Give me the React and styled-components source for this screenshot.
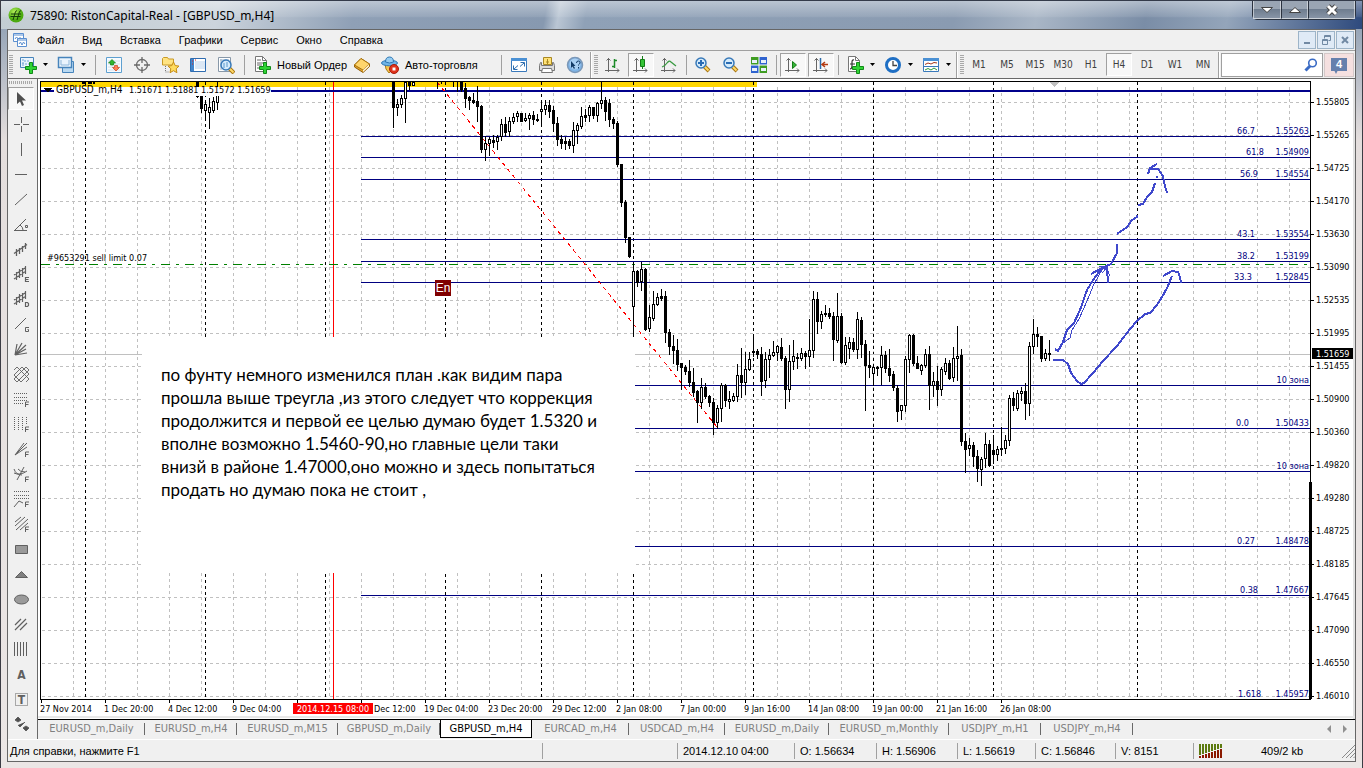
import styled, { createGlobalStyle, css } from 'styled-components';

const COLORS = {
  face: '#f0f0f0',
  line: '#a0a0a0',
  dark: '#696969',
  navy: '#000080',
  grid: '#c0c0c0',
  pen: '#3f48cc',
  icon: '#606060',
};

const FONTS = {
  ui: '"Liberation Sans", Arial, sans-serif',
  title: '"Noto Sans", "Segoe UI", sans-serif',
  chart: '"DejaVu Sans Condensed", Tahoma, sans-serif',
  note: 'Lato, Calibri, sans-serif',
};

const MENU = ['Файл', 'Вид', 'Вставка', 'Графики', 'Сервис', 'Окно', 'Справка'];

const PERIODS = ['M1', 'M5', 'M15', 'M30', 'H1', 'H4', 'D1', 'W1', 'MN'];

const TABS = [
  ['EURUSD_m,Daily', 107],
  ['EURUSD_m,H4', 92],
  ['EURUSD_m,M15', 101],
  ['GBPUSD_m,Daily', 102],
  ['GBPUSD_m,H4', 92],
  ['EURCAD_m,H4', 97],
  ['USDCAD_m,H4', 96],
  ['EURUSD_m,Daily', 104],
  ['EURUSD_m,Monthly', 120],
  ['USDJPY_m,H1', 92],
  ['USDJPY_m,H4', 92],
];
const ACTIVE_TAB = 4;

const PRICES = [
  '1.55805', '1.55265', '1.54725', '1.54170', '1.53630', '1.53090', '1.52535',
  '1.51995', '1.51455', '1.50900', '1.50360', '1.49820', '1.49280', '1.48725',
  '1.48185', '1.47645', '1.47090', '1.46550', '1.46010',
];

// the cursor date covers the fifth label and the start of the sixth
const DATES = [
  [40, '27 Nov 2014'],
  [104, '1 Dec 20:00'],
  [168, '4 Dec 12:00'],
  [232, '9 Dec 04:00'],
  [374, 'Dec 12:00'],
  [424, '19 Dec 04:00'],
  [488, '23 Dec 20:00'],
  [552, '29 Dec 12:00'],
  [616, '2 Jan 08:00'],
  [680, '7 Jan 00:00'],
  [744, '9 Jan 16:00'],
  [808, '14 Jan 08:00'],
  [872, '19 Jan 00:00'],
  [936, '21 Jan 16:00'],
  [1000, '26 Jan 08:00'],
];

// y, ratio, ratio x, right label
const LEVELS = [
  [136, '66.7', 1237, '1.55263'],
  [157, '61.8', 1246, '1.54909'],
  [179, '56.9', 1240, '1.54554'],
  [239, '43.1', 1237, '1.53554'],
  [261, '38.2', 1237, '1.53199'],
  [282, '33.3', 1234, '1.52845'],
  [385, '', 0, '10 зона'],
  [428, '0.0', 1236, '1.50433'],
  [471, '', 0, '10 зона'],
  [546, '0.27', 1237, '1.48478'],
  [595, '0.38', 1240, '1.47667'],
  [699, '1.618', 1238, '1.45957'],
];

const WEEKS = [85, 205, 325, 445, 541, 633, 753, 873, 993, 1137];

const NOTE = [
  'по фунту немного изменился план .как видим пара',
  'прошла выше треугла ,из этого следует что коррекция',
  'продолжится и первой ее целью думаю будет 1.5320 и',
  'вполне возможно 1.5460-90,но главные цели таки',
  'внизй в районе 1.47000,оно можно и здесь попытаться',
  'продать но думаю пока не стоит ,',
];

// each bar: high, top, bottom, low, rising
const BARS = [
  {
    start: 197,
    bars: [
      [82, 82, 96, 97, 0], [90, 95, 108, 112, 0], [100, 104, 110, 118, 1],
      [98, 107, 112, 128, 1], [97, 101, 110, 112, 1], [82, 95, 102, 109, 1],
    ],
  },
  {
    start: 393,
    bars: [
      [82, 82, 107, 127, 0], [99, 104, 107, 115, 1], [95, 98, 104, 107, 1],
      [82, 82, 98, 122, 1], [82, 82, 85, 89, 0], [82, 82, 85, 85, 1],
    ],
  },
  {
    start: 461,
    bars: [
      [82, 82, 89, 91, 0], [83, 88, 98, 107, 0], [96, 97, 100, 109, 0],
      [93, 100, 102, 103, 0], [86, 101, 106, 121, 0], [105, 106, 149, 152, 0],
      [136, 143, 149, 160, 1], [137, 139, 143, 155, 1], [135, 140, 142, 147, 0],
      [135, 137, 141, 149, 1], [119, 124, 136, 140, 1], [117, 124, 132, 136, 0],
      [117, 121, 131, 136, 1], [113, 117, 121, 123, 1], [111, 113, 116, 121, 1],
      [113, 113, 121, 121, 0], [113, 118, 120, 121, 1], [113, 115, 118, 129, 1],
      [111, 115, 119, 124, 0], [114, 119, 120, 121, 0], [102, 109, 111, 125, 1],
      [100, 105, 109, 114, 1], [100, 105, 111, 117, 0], [106, 110, 123, 131, 0],
      [117, 123, 139, 145, 0], [135, 139, 143, 148, 0], [137, 141, 143, 149, 0],
      [139, 141, 145, 148, 0], [122, 130, 145, 152, 1], [123, 125, 130, 143, 1],
      [107, 116, 126, 128, 1], [109, 115, 117, 121, 0], [105, 107, 115, 121, 1],
      [107, 107, 115, 118, 0], [102, 103, 115, 121, 1], [82, 100, 103, 108, 1],
      [97, 100, 111, 120, 0], [99, 103, 119, 126, 0], [117, 119, 123, 128, 0],
      [121, 123, 164, 166, 0], [164, 164, 202, 206, 0], [200, 202, 237, 242, 0],
      [237, 237, 256, 257, 0], [262, 271, 306, 338, 1], [270, 271, 282, 286, 0],
      [262, 269, 281, 290, 1], [268, 269, 329, 330, 0], [305, 317, 328, 331, 1],
      [291, 304, 318, 320, 1], [293, 297, 304, 305, 1], [289, 296, 298, 300, 0],
      [291, 296, 332, 342, 0], [329, 332, 346, 354, 0], [335, 346, 350, 363, 0],
      [339, 350, 364, 370, 0], [363, 363, 367, 389, 0], [365, 367, 371, 374, 0],
      [360, 371, 382, 386, 0], [368, 382, 392, 396, 0], [390, 391, 402, 422, 0],
      [378, 387, 402, 408, 1], [383, 387, 396, 398, 0], [395, 396, 402, 406, 0],
      [398, 402, 422, 434, 0], [405, 408, 422, 428, 1], [383, 385, 408, 421, 1],
      [384, 385, 400, 406, 0], [391, 399, 401, 408, 1], [393, 396, 400, 401, 1],
      [364, 375, 396, 401, 1], [348, 375, 382, 397, 0], [352, 369, 382, 394, 1],
      [352, 359, 369, 370, 1], [337, 351, 352, 356, 0], [349, 351, 354, 358, 0],
      [347, 354, 381, 395, 0], [352, 359, 380, 387, 1], [349, 355, 359, 377, 1],
      [341, 352, 355, 356, 1], [345, 346, 352, 360, 1], [338, 347, 358, 360, 0],
      [356, 358, 389, 408, 0], [345, 361, 389, 401, 1], [340, 356, 361, 369, 1],
      [353, 357, 358, 368, 0], [348, 353, 358, 360, 1], [351, 353, 356, 368, 0],
      [319, 350, 356, 366, 1], [291, 299, 350, 357, 1], [292, 299, 321, 333, 0],
      [311, 314, 321, 328, 1], [305, 313, 314, 316, 0], [308, 313, 316, 318, 0],
      [312, 316, 339, 360, 0], [293, 316, 340, 342, 1], [313, 316, 362, 363, 0],
      [337, 345, 362, 364, 1], [337, 342, 348, 358, 1], [338, 342, 349, 351, 0],
      [312, 319, 349, 358, 1], [317, 320, 344, 357, 0], [340, 344, 365, 410, 0],
      [351, 365, 367, 377, 0], [364, 367, 373, 385, 1], [366, 367, 368, 375, 0],
      [346, 355, 367, 384, 1], [351, 355, 368, 372, 0], [349, 368, 375, 381, 0],
      [371, 374, 387, 390, 0], [385, 388, 411, 421, 0], [405, 405, 410, 419, 1],
      [356, 359, 405, 411, 1], [334, 335, 359, 372, 1], [334, 335, 363, 365, 0],
      [356, 363, 368, 368, 0], [364, 365, 370, 374, 1], [349, 354, 365, 367, 1],
      [346, 354, 385, 409, 0], [372, 381, 385, 396, 1], [366, 381, 389, 405, 0],
      [367, 369, 389, 395, 1], [358, 363, 371, 374, 1], [360, 363, 378, 379, 0],
      [347, 358, 377, 381, 1], [326, 356, 358, 380, 1], [349, 355, 441, 445, 0],
      [433, 441, 449, 472, 0], [438, 445, 448, 455, 1], [442, 445, 456, 466, 0],
      [450, 456, 468, 481, 0], [457, 459, 469, 485, 1], [433, 444, 458, 467, 1],
      [440, 444, 465, 466, 0], [435, 450, 454, 463, 0], [446, 449, 454, 460, 1],
      [427, 448, 449, 455, 0], [435, 440, 448, 453, 1], [395, 398, 440, 445, 1],
      [392, 398, 405, 410, 0], [390, 393, 408, 410, 1], [387, 391, 393, 400, 1],
      [383, 391, 403, 419, 0], [342, 346, 403, 415, 1], [319, 334, 346, 353, 1],
      [327, 334, 336, 346, 0], [336, 336, 358, 361, 0], [349, 353, 358, 360, 1],
      [340, 353, 354, 360, 0],
    ],
  },
];

const App = () => {
  return (
    <Window>
      <GlobalStyle />
      <TitleBar>
        <LogoIcon />
        <Title>75890: RistonCapital-Real - [GBPUSD_m,H4]</Title>
        <CaptionButtons>
          <CaptionButton $width={28} aria-label="Свернуть">
            <svg width="12" height="8">
              <path d="M.5 1.5h11L6 6.500z" fill="#fff" stroke="#444" />
            </svg>
          </CaptionButton>
          <CaptionButton $width={27} aria-label="Развернуть">
            <svg width="12" height="8">
              <path d="M.5 6.5h11L6 1.5z" fill="#fff" stroke="#444" />
            </svg>
          </CaptionButton>
          <CaptionButton $width={47} aria-label="Закрыть">
            <svg width="14" height="12">
              <path d="M3 2l8 8M11 2l-8 8" stroke="#444" strokeWidth="5" />
              <path d="M3 2l8 8M11 2l-8 8" stroke="#fff" strokeWidth="3" />
            </svg>
          </CaptionButton>
        </CaptionButtons>
      </TitleBar>
      <Panel>
        <MenuBar>
          <ChartFileIcon />
          {MENU.map((item) => (
            <MenuItem key={item}>{item}</MenuItem>
          ))}
          <MdiButtons>
            <MdiButton aria-label="Свернуть окно">
              <svg width="12" height="12">
                <path d="M3 9h6" stroke="#7189a3" strokeWidth="2" />
              </svg>
            </MdiButton>
            <MdiButton aria-label="Восстановить окно">
              <svg width="12" height="12" fill="none" stroke="#7189a3">
                <path d="M4.500 4.500v-3h6v5h-2M4.500 2.500h6M2.500 5.500h5v5h-5zM2.500 6.500h5" />
              </svg>
            </MdiButton>
            <MdiButton aria-label="Закрыть окно">
              <svg width="12" height="12">
                <path d="M3 3l6 6M9 3l-6 6" stroke="#7189a3" strokeWidth="2" />
              </svg>
            </MdiButton>
          </MdiButtons>
        </MenuBar>
        <ToolBar>
          <Grip />
          <Tool label="Новый график" icon={<AddChartIcon />} menu />
          <Tool label="Профили" icon={<ProfilesIcon />} menu />
          <Separator $width={10} />
          <Tool label="Обзор рынка" icon={<MarketIcon />} />
          <Tool label="Окно данных" icon={<TargetIcon />} />
          <Tool label="Навигатор" icon={<FolderIcon />} />
          <Tool label="Терминал" icon={<TerminalIcon />} />
          <Tool label="Тестер стратегий" icon={<TesterIcon />} />
          <Separator $width={8} />
          <TextTool $width={100}>
            <NewOrderIcon />
            Новый Ордер
          </TextTool>
          <Tool label="MetaEditor" icon={<BookIcon />} />
          <TextTool $width={121}>
            <RobotIcon />
            Авто-торговля
          </TextTool>
          <Separator $width={8} />
          <Tool label="Полный экран" icon={<FullscreenIcon />} />
          <Tool label="Печать" icon={<PrinterIcon />} />
          <Tool label="Помощь" icon={<HelpIcon />} />
          <Divider />
          <Grip />
          <Tool label="Бары" icon={<AxisIcon kind="bars" />} />
          <Tool label="Свечи" icon={<AxisIcon kind="candle" />} pressed />
          <Tool label="Линия" icon={<AxisIcon kind="line" />} />
          <Separator $width={6} />
          <Tool label="Увеличить" icon={<ZoomIcon plus />} />
          <Tool label="Уменьшить" icon={<ZoomIcon />} />
          <Tool label="Расположить окна" icon={<TileIcon />} />
          <Separator $width={6} />
          <Tool label="Автопрокрутка" icon={<AxisIcon kind="scroll" />} pressed />
          <Tool label="Сдвиг графика" icon={<AxisIcon kind="shift" />} pressed />
          <Separator $width={6} />
          <Tool label="Индикаторы" icon={<IndicatorIcon />} menu />
          <Tool label="Периоды" icon={<ClockIcon />} menu />
          <Tool label="Шаблоны" icon={<TemplateIcon />} menu />
          <Divider />
          <Grip />
          {PERIODS.map((period) => (
            <PeriodButton key={period} $pressed={period === 'H4'}>
              {period}
            </PeriodButton>
          ))}
          <Divider />
          <SearchBox>
            <SearchInput aria-label="Поиск" />
            <SearchIcon />
          </SearchBox>
          <ChatButton>
            <ChatBubble>4</ChatBubble>
          </ChatButton>
        </ToolBar>
        <Main>
          <SideBar>
            <SideGrip />
            {DRAW_TOOLS.map(([label, icon], i) => (
              <SideButton key={label} aria-label={label} $pressed={i === 0}>
                <svg width="18" height="18" fill="none" stroke={COLORS.icon}>
                  {icon}
                </svg>
              </SideButton>
            ))}
          </SideBar>
          <Workspace>
            <Chart />
            <TabBar>
              {TABS.map(([name, width], i) => (
                <Tab key={i} $width={width} $active={i === ACTIVE_TAB}>
                  {name}
                </Tab>
              ))}
              <TabArrows>
                <svg width="20" height="8" fill="#909090">
                  <path d="M4 0v8L0 4zM16 0v8l4-4z" />
                </svg>
              </TabArrows>
            </TabBar>
          </Workspace>
        </Main>
        <StatusBar>
          <StatusHelp>Для справки, нажмите F1</StatusHelp>
          <StatusCell $width={135} />
          <StatusCell $width={117}>2014.12.10 04:00</StatusCell>
          <StatusCell $width={82}>O: 1.56634</StatusCell>
          <StatusCell $width={81}>H: 1.56906</StatusCell>
          <StatusCell $width={78}>L: 1.56619</StatusCell>
          <StatusCell $width={80}>C: 1.56846</StatusCell>
          <StatusCell $width={78}>V: 8151</StatusCell>
          <StatusCell $width={162}>
            <TrafficIcon />
            <Traffic>409/2 kb</Traffic>
            <ResizeGrip />
          </StatusCell>
        </StatusBar>
      </Panel>
    </Window>
  );
};

const Tool = ({ label, icon, menu, pressed }) => (
  <>
    <ToolButton aria-label={label} $pressed={pressed}>
      {icon}
    </ToolButton>
    {menu && (
      <ArrowButton aria-label={`${label}: меню`}>
        <svg width="5" height="3">
          <path d="M0 0h5L2.500 3z" />
        </svg>
      </ArrowButton>
    )}
  </>
);

const Candle = ({ x, bar }) => {
  const [high, top, bottom, low, rising] = bar;
  const height = bottom - top + 1;

  return (
    <>
      <rect x={x} y={high} width="1" height={low - high + 1} />
      <rect x={x - 1} y={top} width="3" height={height} />
      {rising === 1 && height > 2 && (
        <rect x={x} y={top + 1} width="1" height={height - 2} fill="#fff" />
      )}
    </>
  );
};

// the viewBox starts at the chart's corner inside the terminal window
const Chart = () => (
  <ChartCanvas viewBox="38 79 1317 640">
    <g shapeRendering="crispEdges">
      <rect x="38" y="79" width="1317" height="640" fill="#fff" />
      <rect x="1353" y="79" width="2" height="640" fill="#e3e3e3" />
      <rect x="38" y="716" width="1317" height="2" fill="#e8e8e8" />

      <rect x="41" y="82" width="716" height="5" fill="#ffd700" />

      <g stroke={COLORS.grid} strokeDasharray="3 3">
        {PRICES.map((price, i) => (
          <path key={price} d={`M42 ${102.5 + i * 33}H1310`} />
        ))}
        {Array.from({ length: 39 }, (_, i) => (
          <path key={i} d={`M${73.5 + i * 32} 87V699`} />
        ))}
      </g>
      <g stroke="#000" strokeDasharray="3 3">
        {WEEKS.map((x) => (
          <path key={x} d={`M${x}.5 82V699`} />
        ))}
      </g>
      <rect x="41" y="354" width="1269" height="1" fill={COLORS.grid} />
      <rect x="333" y="82" width="1" height="617" fill="#f00" />

      <rect x="41" y="90" width="1269" height="2" fill="#00008b" />
      {LEVELS.slice(0, -1).map(([y]) => (
        <rect key={y} x="361" y={y} width="949" height="1" fill={COLORS.navy} />
      ))}
      <path
        d="M41 264.5H1310"
        stroke="#008000"
        strokeDasharray="9 6 3 6"
      />
      <path d="M437 82L717 427" stroke="#f00" strokeDasharray="4 4" />

      <g fill="#000">
        <path d="M437 82h1v7h-1zM441 82h1v2h-1zM453 82h1v5h-1zM457 82h1v10h-1z" />
        <path d="M82 82h3v2h-3zM88 82h4v2h-4zM93 82h2v2h-2z" />
        {BARS.map(({ start, bars }) =>
          bars.map((bar, i) => (
            <Candle key={start + i * 4} x={start + i * 4} bar={bar} />
          ))
        )}
      </g>

      <rect x="54" y="87" width="217" height="9" fill="#fff" />
      <path d="M43 88h9l-4 4h-1z" fill="#000" />
      <rect x="142" y="337" width="493" height="236" fill="#fff" />
      <path d="M1050 82h9l-4.500 5z" fill={COLORS.grid} />

      <rect x="40" y="81" width="1271" height="1" />
      <rect x="40" y="81" width="1" height="619" />
      <rect x="40" y="699" width="1271" height="1" />
      <rect x="1310" y="81" width="1" height="619" />
      <rect x="1309" y="482" width="3" height="217" />

      {PRICES.map((price, i) => (
        <rect key={price} x="1311" y={102 + i * 33} width="3" height="1" />
      ))}
      {Array.from({ length: 16 }, (_, i) => (
        <rect key={i} x={41 + i * 64} y="700" width="1" height="3" />
      ))}
    </g>

    <g
      fill="none"
      stroke={COLORS.pen}
      strokeWidth="2"
      strokeLinejoin="round"
      shapeRendering="crispEdges"
    >
      <path d="M1053 360l10 0 5 4 3 9 6 8 4 3 3-1 9-10 10-12 14-15 13-17 7-8 8-7 5-1 7-8 5-8 5-9 5-12M1163 276l9-5 6 1 2 5 1 6" />
      <path d="M1055 349l3 2 5-9 4-12 7-7 6-13 7-20 6-10 9-12 9-4 6-11 0-9M1091 274l11-6 5 1 1 14" />
      <path d="M1117 234l10-7 5-7 5-3 0-2M1138 205l5-1 4-7 5-5 3-9M1148 174l2-6 7-4M1150 169l8 0 5 7 2 10 2 7M1156 177h2" />
      <path
        d="M1103 268l-9 16-7 17-8 18-7 11-2 8-7 5M1099 266l7 1 4 9M1102 273l6-6"
        strokeWidth="1"
      />
    </g>

    <TickerText x="56" y="93">
      GBPUSD_m,H4
    </TickerText>
    <ChartText x="129" y="93">
      1.51671 1.51881 1.51572 1.51659
    </ChartText>
    <ChartText x="47" y="261">
      #9653291 sell limit 0.07
    </ChartText>
    {LEVELS.map(([y, ratio, x, label]) => (
      <g key={y}>
        <ChartText x={x} y={y - 2} $color={COLORS.navy}>
          {ratio}
        </ChartText>
        <ChartText x="1309" y={y - 2} $color={COLORS.navy} textAnchor="end">
          {label}
        </ChartText>
      </g>
    ))}
    {PRICES.map((price, i) => (
      <ChartText key={price} x="1316" y={105 + i * 33}>
        {price}
      </ChartText>
    ))}
    {DATES.map(([x, date]) => (
      <ChartText key={date} x={x} y="712">
        {date}
      </ChartText>
    ))}

    <rect x="293" y="703" width="80" height="11" fill="#f00" />
    <ChartText x="333" y="712" $color="#fff" textAnchor="middle">
      2014.12.15 08:00
    </ChartText>
    <rect x="1312" y="348" width="41" height="11" />
    <ChartText x="1316" y="357" $color="#fff">
      1.51659
    </ChartText>

    <rect x="435" y="280" width="16" height="16" fill="#800000" />
    <BadgeText x="443" y="292">
      En
    </BadgeText>

    {NOTE.map((line, i) => (
      <NoteText key={line} x="161" y={381 + i * 23}>
        {line}
      </NoteText>
    ))}
  </ChartCanvas>
);

const LogoIcon = () => (
  <svg width="16" height="16">
    <defs>
      <radialGradient id="logo" cx="40%" cy="30%">
        <stop offset="0" stopColor="#b6f05a" />
        <stop offset="1" stopColor="#4caa10" />
      </radialGradient>
    </defs>
    <circle cx="8" cy="8" r="7.5" fill="url(#logo)" />
    <path
      d="M3 7h10M2.500 9.500h10M5 13l2.500-8.500q.5-1 1.500-.5M9 13l2.500-8.500q.5-1 1.500-.5"
      fill="none"
      stroke="#123c08"
    />
  </svg>
);

const ChartFileIcon = () => (
  <svg width="16" height="16" fill="#fff" stroke="#5b8fd0">
    <path d="M1.500 1.500h10v8h-10z" />
    <path d="M2 3h9" />
    <path d="M3 7l1.500-2 2 2 2-2" fill="none" />
    <path d="M5.500 6.500h9v8h-9z" />
    <path d="M6 8h8M7 12l1.500-2 1.500 3 1.500-3 1.500 2" fill="none" />
  </svg>
);

const PlusMark = () => (
  <path
    d="M10.500 6.500h3v4h4v3h-4v4h-3v-4h-4v-3h4z"
    fill="#2fd334"
    stroke="#118a18"
  />
);

const AddChartIcon = () => (
  <svg width="18" height="18">
    <path d="M1.500 1.500h13v10h-13z" fill="#eaf4fd" stroke="#4784bb" />
    <path d="M4 3v7M3 8h9M5 5h6" stroke="#6fa3d3" strokeDasharray="2 1" />
    <PlusMark />
  </svg>
);

const ProfilesIcon = () => (
  <svg width="18" height="18" fill="#eaf4fd" stroke="#4784bb">
    <path d="M5.500 5.500h11v11h-11z" fill="#b9d9f2" />
    <path d="M1.500 1.500h13v10h-13z" strokeWidth="1.500" />
    <path d="M4 4v5M12 4v5M4 9h8" stroke="#8fb7da" />
  </svg>
);

const MarketIcon = () => (
  <svg width="18" height="18">
    <path d="M1.500 1.500h15v15h-15z" fill="#f7fbff" stroke="#5ea0d0" />
    <path d="M3 5h12M3 8h12M3 11h12M3 14h12" stroke="#d5e0ea" />
    <path d="M3.500 7L7 3.500l3.500 3.500h-2v2h-3v-2z" fill="#30b52f" stroke="#137d16" strokeWidth=".7" />
    <path d="M7.500 11.500l3.500 3.500 3.500-3.500h-2v-2h-3v2z" fill="#ff8055" stroke="#c9401c" strokeWidth=".7" />
  </svg>
);

const TargetIcon = () => (
  <svg width="18" height="18" fill="none" stroke="#6a6a6a" strokeWidth="1.300">
    <circle cx="9" cy="9" r="5.5" />
    <path d="M9 1v6M9 11v6M1 9h6M11 9h6" />
  </svg>
);

const Star = () => (
  <path
    d="M12.500 6l1.700 3.600 3.800.5-2.800 2.600.7 4-3.400-2-3.500 2 .8-4L7 10.100l3.800-.5z"
    fill="#ffdc5e"
    stroke="#c58b14"
  />
);

const FolderIcon = () => (
  <svg width="19" height="18">
    <path d="M1.500 2.500l1-1h4l1 1.500h5v6h-11z" fill="#ffe382" stroke="#c99a26" />
    <path d="M4.500 10v6h4" fill="none" stroke="#777" strokeDasharray="1 1" />
    <Star />
  </svg>
);

const TerminalIcon = () => (
  <svg width="18" height="18">
    <path d="M1.500 2.500h15v13h-15z" fill="#fff" stroke="#2f6cb0" />
    <path d="M2 3h3v12h-3z" fill="#4385cb" />
    <path d="M6 6h10M6 8h10M6 10h10M6 12h10" stroke="#b9d0ea" />
    <path d="M6 4h1M3 5h1M3 8h1" stroke="#d22" />
  </svg>
);

const Lens = ({ x, y }) => (
  <g transform={`translate(${x} ${y})`}>
    <path d="M9 9l5 5" stroke="#a9750f" strokeWidth="4" />
    <path d="M9 9l4.500 4.500" stroke="#ffd968" strokeWidth="2" />
    <circle cx="6" cy="6" r="5" fill="#d5ebfb" stroke="#3879b8" strokeWidth="1.500" />
  </g>
);

const TesterIcon = () => (
  <svg width="18" height="18">
    <path d="M1.500 1.500h12v14h-12z" fill="#fff" stroke="#8898a8" />
    <path d="M3 4h9M4 3v11M4 8h3" stroke="#9ab0c4" />
    <Lens x={3} y={3} />
    <path d="M7 7v5M10 6v5" stroke="#5d98cc" />
  </svg>
);

const SheetPlus = ({ children }) => (
  <svg width="18" height="18">
    <path d="M2.500.500h7l4 4v11h-11z" fill="#fff" stroke="#777" />
    <path d="M9.500.500v4h4" fill="none" stroke="#777" />
    {children}
    <PlusMark />
  </svg>
);

const NewOrderIcon = () => (
  <SheetPlus>
    <path d="M4 4h4M4 7h7M4 9h5M4 12h4" stroke="#666" />
  </SheetPlus>
);

const IndicatorIcon = () => (
  <SheetPlus>
    <path
      d="M4 13q2 0 2-3V6q0-2.500 2-2M4 8h5"
      fill="none"
      stroke="#333"
      strokeWidth="1.200"
    />
  </SheetPlus>
);

const BookIcon = () => (
  <svg width="18" height="18">
    <path d="M1.500 9L8 2.500l8.500 5.500v2.500L10 16.500 1.500 11z" fill="#e0a22a" stroke="#93600c" />
    <path d="M1.500 9L8 2.500l8.500 5.500-6.500 6z" fill="#ffd56c" stroke="#a8730f" />
    <path d="M10 14v2l6-5.500v-2z" fill="#fff3d4" />
  </svg>
);

const RobotIcon = () => (
  <svg width="18" height="18">
    <path d="M4 8h9l-1 5-4 4-3-4z" fill="#f8c84e" stroke="#a87a18" />
    <ellipse cx="8.5" cy="7" rx="8" ry="2.8" fill="#6fb4e6" stroke="#2f78b4" />
    <path d="M4.500 6q0-5 4-5t4 5q-4 2-8 0z" fill="#96cdf2" stroke="#2f78b4" />
    <circle cx="13" cy="13" r="4.5" fill="#e0331c" stroke="#a81c0c" />
    <path d="M11.500 11.500h3v3h-3z" fill="#fff" />
  </svg>
);

const FullscreenIcon = () => (
  <svg width="18" height="18">
    <path d="M1.500 2.500h15v13h-15z" fill="#fff" stroke="#3a79bb" />
    <path d="M1 2h16v3h-16z" fill="#4a90d4" />
    <path d="M10.500 6.500h4v4M14 7l-4 3.500M3.500 9.500v4h4M4 13l4-3.500" fill="none" stroke="#2c6cae" />
  </svg>
);

const PrinterIcon = () => (
  <svg width="18" height="18">
    <path d="M5.500 1.500h8v7h-8z" fill="#ffe277" stroke="#a98822" />
    <path d="M9.500 3v5M8 6h3" stroke="#a98822" />
    <path d="M3.500 6.500h-1l-1 3v5h15v-5l-1-3h-1v3h-11z" fill="#dcdcdc" stroke="#777" />
    <path d="M4.500 12.500h9l1 4h-11z" fill="#fff" stroke="#777" />
  </svg>
);

const HelpIcon = () => (
  <svg width="18" height="18">
    <circle cx="9" cy="9" r="7.5" fill="#7fb4e6" stroke="#7b98b8" strokeWidth="1.500" />
    <circle cx="9" cy="8" r="5.5" fill="#a9cff2" />
    <path d="M5 5v7l1.500-1.500 1.500 2.500 1-1-1.500-2h2z" fill="#123a66" />
    <path d="M10.500 7q0-2 1.800-2t1.700 1.800q0 1-1.500 2v.7M12.500 11v1.500" fill="none" stroke="#123a66" />
  </svg>
);

const AxisIcon = ({ kind }) => (
  <svg width="18" height="18" fill="none">
    <path
      d="M4.500 2v14M1 14.500h14M2.500 4.500l2-2 2 2M13 12.500l2 2-2 2"
      stroke="#666"
    />
    {kind === 'bars' && (
      <path d="M10.500 3v9M8 10.500h2.500M10.500 4.500h2.500" stroke="#1c8a28" strokeWidth="1.500" />
    )}
    {kind === 'candle' && (
      <>
        <path d="M10.500 0v13" stroke="#137d16" />
        <path d="M8.500 3.500h4v7h-4z" fill="#35c437" stroke="#137d16" />
      </>
    )}
    {kind === 'line' && (
      <path d="M2 11q3-1 5-4t4-1l5 4" stroke="#3a9a42" strokeWidth="1.300" />
    )}
    {kind === 'scroll' && (
      <path d="M8.500 5.500l4 3.500-4 3.500z" fill="#35b437" stroke="#137d16" />
    )}
    {kind === 'shift' && (
      <>
        <path d="M8.500 2v11" stroke="#2b6aa8" strokeWidth="1.500" />
        <path d="M10 8.500h6M13 6l-3 2.500 3 2.500" stroke="#b33a12" strokeWidth="1.500" />
      </>
    )}
  </svg>
);

const ZoomIcon = ({ plus }) => (
  <svg width="18" height="18">
    <Lens x={1} y={1} />
    <path d={plus ? 'M4 7h6M7 4v6' : 'M4 7h6'} stroke="#2a6cb4" strokeWidth="2" />
  </svg>
);

const TileIcon = () => (
  <svg width="18" height="18">
    <path d="M1 1h8v8h-8zM9 9h8v8h-8z" fill="#3f9c22" />
    <path d="M9 1h8v8h-8zM1 9h8v8h-8z" fill="#2f63cf" />
    <path d="M2 4h5v3h-5zM11 4h5v3h-5zM2 12h5v3h-5zM11 12h5v3h-5z" fill="#e8f0fb" />
    <path d="M9 1v16M1 9h16" stroke="#fff" />
  </svg>
);

const ClockIcon = () => (
  <svg width="18" height="18">
    <circle cx="9" cy="9" r="6.5" fill="#fff" stroke="#1f6fc4" strokeWidth="3" />
    <path d="M9 5v4.500h4" fill="none" stroke="#444" strokeWidth="1.300" />
  </svg>
);

const TemplateIcon = () => (
  <svg width="18" height="18">
    <path d="M1.500 2.500h15v13h-15z" fill="#fff" stroke="#3a79bb" />
    <path d="M1 2h16v3h-16z" fill="#4a90d4" />
    <path d="M2 10.500h14" stroke="#3a79bb" />
    <path d="M3 8.500l3-1.500 3 1 3-1.500 3 .5" fill="none" stroke="#a3361a" />
    <path d="M3 14l3-1.500 3 1.500 3-2 3 2" fill="none" stroke="#2c9a38" />
  </svg>
);

const SearchIcon = () => (
  <svg width="14" height="14" fill="none" stroke="#3a6bc4">
    <path d="M1.500 12.500L6 8" strokeWidth="3" />
    <circle cx="8.5" cy="5" r="3.8" strokeWidth="1.600" />
  </svg>
);

const TrafficIcon = () => (
  <svg width="24" height="14">
    {Array.from({ length: 8 }, (_, i) => (
      <g key={i}>
        <rect x={i * 3} y="0" width="2" height="14" fill="#8b1a00" />
        <rect x={i * 3} y="0" width="2" height={11 - i} fill="#5c7a10" />
        <rect x={i * 3} y={11 - i} width="2" height="1" fill="#f0f0f0" />
      </g>
    ))}
  </svg>
);

const ResizeGrip = () => (
  <svg width="14" height="14" stroke="#8a8a8a">
    <path d="M1 14L14 1M5 14l9-9M9 14l5-5M12.500 14l1.500-1.500" />
  </svg>
);

const letterF = <path d="M13.500 17v-5h3.500M13.500 14.500h3" />;

const Letter = ({ children }) => (
  <Glyph x="9.5" y="14" textAnchor="middle">
    {children}
  </Glyph>
);

const DRAW_TOOLS = [
  ['Курсор', <path d="M5 2v12l3-2.500 2 4.500 2-1-2-4.500h4z" fill="#505050" stroke="none" />],
  ['Перекрестие', <path d="M9.500 2v6M9.500 11v6M2 9.500h6M11 9.500h6" />],
  ['Вертикальная линия', <path d="M9.500 3v13" />],
  ['Горизонтальная линия', <path d="M3 9.500h12" />],
  ['Трендовая линия', <path d="M3 15L15 4" />],
  ['Трендовая линия по углу', <path d="M2 15.500h13M3 15L14 4M8 10q3 2 3 5M13.500 10.500h2v2h-2z" />],
  ['Равноудаленный канал', <path d="M2 13.500l13-9M4.500 9v7M7.500 8v6M10.500 6v6M13.500 3v6" strokeWidth="1.300" />],
  ['Канал отклонения', <path d="M2 10l11-7M2 14l12-8M4.500 7v8M7.500 4v9M10.500 3v9M13.500 1v8M17 12.500h-3.500v4h3.500M13.500 14.500h3" strokeWidth="1.200" />],
  ['Канал регрессии', <path d="M2 10l11-7M2 14l12-8M4.500 7v8M7.500 4v9M10.500 3v9M13.500 1v8M13.500 12.500h2l1 1v2l-1 1h-2z" strokeWidth="1.200" />],
  ['Линия Ганна', <path d="M3 14L14 3M17 12.500h-3.500v4h3v-2h-1" />],
  ['Веер Ганна', <path d="M3 15L5 4M3 15L10 3M3 15L14 5M3 15l11-6M3 15l12-2" strokeWidth="1.200" />],
  ['Сетка Ганна', <path d="M2 5l3-3 12 12-3 3M2 10l8-8 7 7-8 8-7-7M2 14L14 2l3 3L5 17z" strokeWidth=".9" />],
  ['Линии Фибоначчи', <><path d="M2 3.500h14M2 7.500h14M2 10.500h14M2 13.500h10" strokeDasharray="1 1" />{letterF}</>],
  ['Временные зоны Фибоначчи', <><path d="M2.500 2v13M6.500 2v13M10.500 2v13M14.500 2v8" strokeDasharray="1 1" />{letterF}</>],
  ['Веер Фибоначчи', <><path d="M3 15L12 3M3 15L15 3M3 15l12-8" />{letterF}</>],
  ['Дуги Фибоначчи', <><path d="M2 4q2 6 8 6M6 4q2 3 7 3M5 15L12 2M2 8q6 3 13-2" />{letterF}</>],
  ['Расширение Фибоначчи', <><path d="M2 1.500h15M2 5.500h15M2 8.500h15" strokeDasharray="1 1" /><path d="M2 17l5-6 4 2" />{letterF}</>],
  ['Канал Фибоначчи', <><path d="M3 7l6-5M3 11L13 2M4 15L16 4M8 15l8-7" />{letterF}</>],
  ['Прямоугольник', <path d="M3.500 5.500h12v8h-12z" fill="#9a9a9a" />],
  ['Треугольник', <path d="M3.500 12.500l6-6 6 6z" fill="#808080" />],
  ['Эллипс', <ellipse cx="9.5" cy="9.5" rx="7" ry="4.5" fill="#9a9a9a" />],
  ['Вилы Эндрюса', <path d="M3 10l6-6M3 15L14 4M8 15l7-7" strokeWidth="1.200" />],
  ['Циклические линии', <path d="M2.500 2v14M5.500 2v14M8.500 2v14M11.500 2v14M14.500 2v14" />],
  ['Текст', <Letter>A</Letter>],
  ['Метка', <><path d="M3.500 3.500h12v12h-12z" strokeDasharray="1 1" /><Letter>T</Letter></>],
  ['Стрелки', <path d="M3 5l3-3 3 3-3 2zM11 13l3-2 3 2-3 3zM6 10l2 2 5-5" fill="#505050" />],
];

const GlobalStyle = createGlobalStyle`
  * {
    box-sizing: border-box;
  }

  body {
    margin: 0;
    font-family: ${FONTS.ui};
    font-size: 11px;
    color: #000;
  }

  button {
    padding: 0;
    border: 0;
    background: none;
    font: inherit;
    color: inherit;
  }

  svg {
    display: block;
    flex: none;
  }
`;

const pressedStyle = css`
  border: 1px solid #fff;
  border-top-color: ${COLORS.line};
  border-left-color: ${COLORS.line};
  background: #f8f8f8;
`;

const Window = styled.div`
  min-height: 100vh;
  padding: 0 6px 6px;

  display: flex;
  flex-direction: column;

  border: 1px solid #3c3c44;
  border-top: 0;
  background: linear-gradient(#a9b6c8 0, #98a6b8 30px, #e4dedd 140px, #ebe6e5);
`;

const TitleBar = styled.header`
  height: 29px;
  margin: 0 -6px;
  padding-left: 7px;

  display: flex;
  align-items: center;
  gap: 6px;

  border-top: 1px solid #343b4a;
  background: linear-gradient(
      rgba(255, 255, 255, 0.4),
      rgba(255, 255, 255, 0.1) 55%,
      rgba(255, 255, 255, 0) 60%
    ),
    linear-gradient(
      100deg,
      #c3cdd2 0,
      #ccd4dc 16%,
      #8fa0b6 26%,
      #8799b0 40%,
      #bac6d4 41%,
      #8fa1b7 43%,
      #8a9bb1 70%,
      #a9b6c6 76%,
      #7a8da6 84%,
      #94a5ba 90%,
      #2e4a7d 100%
    );
`;

const Title = styled.h1`
  margin: 0;

  font-family: ${FONTS.title};
  font-size: 12px;
  font-weight: 400;
  white-space: nowrap;
`;

const CaptionButtons = styled.div`
  margin: 0 6px 0 auto;

  align-self: flex-start;
  display: flex;

  border: 1px solid #2b3340;
  border-top: 0;
  border-radius: 0 0 5px 5px;
`;

const CaptionButton = styled.button`
  width: ${({ $width }) => $width}px;
  height: 18px;

  display: flex;
  align-items: center;
  justify-content: center;

  border: 1px solid rgba(255, 255, 255, 0.5);
  border-top: 0;
  background: linear-gradient(#9aa5b3 50%, #6f7d8f 50%, #8794a6);

  & + & {
    border-left: 1px solid #2b3340;
  }
`;

const Panel = styled.div`
  flex: 1;

  display: flex;
  flex-direction: column;

  border: 1px solid #666;
  background: ${COLORS.face};
`;

const MenuBar = styled.nav`
  height: 21px;
  padding-left: 4px;

  display: flex;
  align-items: center;

  border-bottom: 1px solid ${COLORS.line};
`;

const MenuItem = styled.button`
  padding: 0 9px;
`;

const MdiButtons = styled.div`
  margin-left: auto;
  padding-right: 1px;

  display: flex;
  gap: 1px;
`;

const MdiButton = styled.button`
  width: 18px;
  height: 18px;

  display: flex;
  align-items: center;
  justify-content: center;

  border: 1px solid #9db4c8;
  background: #dfeaf6;
`;

const ToolBar = styled.div`
  height: 28px;

  display: flex;
  align-items: center;

  border-bottom: 1px solid ${COLORS.dark};
`;

const Grip = styled.div`
  width: 4px;
  height: 20px;
  margin: 0 1px;

  flex: none;
  background: repeating-linear-gradient(#a8a8a8 0 1px, transparent 1px 2px);
`;

const ToolButton = styled.button`
  width: 28px;
  height: 24px;

  flex: none;
  display: flex;
  align-items: center;
  justify-content: center;

  ${({ $pressed }) =>
    $pressed &&
    css`
      width: 26px;
      margin: 0 1px;
      ${pressedStyle}
    `}
`;

const ArrowButton = styled.button`
  width: 10px;
  height: 24px;
  padding-left: 1px;

  flex: none;
`;

const TextTool = styled.button`
  width: ${({ $width }) => $width}px;
  height: 24px;
  padding-left: 5px;

  flex: none;
  display: flex;
  align-items: center;
  gap: 6px;

  white-space: nowrap;
`;

const Separator = styled.div`
  width: ${({ $width }) => $width}px;
  height: 20px;

  flex: none;
  background: linear-gradient(${COLORS.line}, ${COLORS.line}) center / 1px 100%
    no-repeat;
`;

const Divider = styled.div`
  width: 2px;
  height: 26px;
  margin: 0 1px;

  flex: none;
  border-left: 1px solid ${COLORS.line};
  border-right: 1px solid #fff;
`;

const PeriodButton = styled.button`
  width: ${({ $pressed }) => ($pressed ? 26 : 28)}px;
  height: 23px;

  flex: none;
  color: #404040;
  font-family: ${FONTS.chart};
  font-size: 10px;

  ${({ $pressed }) =>
    $pressed &&
    css`
      margin: 0 1px;
      ${pressedStyle}
    `}
`;

const SearchBox = styled.label`
  min-width: 60px;
  height: 24px;
  padding-right: 4px;

  flex: 1;
  display: flex;
  align-items: center;

  border: 1px solid ${COLORS.line};
  background: #fff;
`;

const SearchInput = styled.input`
  min-width: 0;

  flex: 1;
  border: 0;
  outline: 0;
  font: inherit;
`;

const ChatButton = styled.button`
  width: 30px;
  height: 24px;
  margin: 0 1px;

  display: flex;
  align-items: center;
  justify-content: center;

  border: 1px solid #d4c8c8;
  background: #f5e0e0;
`;

const ChatBubble = styled.span`
  position: relative;
  width: 16px;
  height: 13px;

  background: #6680ad;
  color: #fff;
  font-weight: 700;
  line-height: 13px;

  &::after {
    content: '';
    position: absolute;
    top: 12px;
    left: 3px;
    border: 2px solid transparent;
    border-top: 4px solid #6680ad;
  }
`;

const Main = styled.main`
  flex: 1;
  display: flex;
`;

const SideBar = styled.aside`
  width: 30px;
  padding: 2px 3px 0 0;

  flex: none;
  display: flex;
  flex-direction: column;
  align-items: center;

  border-right: 1px solid ${COLORS.dark};
`;

const SideGrip = styled.div`
  width: 24px;
  height: 3px;
  margin-bottom: 2px;

  background: repeating-linear-gradient(
    90deg,
    #a8a8a8 0 1px,
    transparent 1px 2px
  );
`;

const SideButton = styled.button`
  width: 26px;
  height: ${({ $pressed }) => ($pressed ? 23 : 25)}px;

  display: flex;
  align-items: center;
  justify-content: center;

  ${({ $pressed }) =>
    $pressed &&
    css`
      margin: 1px 0;
      ${pressedStyle}
    `}
`;

const Glyph = styled.text`
  fill: #606060;
  stroke: none;
  font-family: ${FONTS.chart};
  font-size: 12px;
  font-weight: 700;
`;

const Workspace = styled.section`
  min-width: 0;

  flex: 1;
  display: flex;
  flex-direction: column;
`;

const ChartCanvas = styled.svg`
  width: 100%;
  height: auto;
`;

const ChartText = styled.text`
  fill: ${({ $color }) => $color || '#000'};
  font-family: ${FONTS.chart};
  font-size: 9px;
`;

const TickerText = styled(ChartText)`
  font-size: 10px;
`;

const BadgeText = styled.text`
  fill: #fff;
  text-anchor: middle;
  font-family: ${FONTS.ui};
  font-size: 12px;
`;

const NoteText = styled.text`
  font-family: ${FONTS.note};
  font-size: 17px;
`;

const TabBar = styled.div`
  height: 20px;

  display: flex;
  align-items: flex-start;

  border-top: 1px solid #000;
`;

const Tab = styled.button`
  position: relative;
  width: ${({ $width }) => $width}px;
  height: 18px;

  flex: none;
  color: #808080;
  font-family: ${FONTS.chart};
  font-size: 11px;
  line-height: 16px;

  &::after {
    content: '';
    position: absolute;
    top: 3px;
    right: 0;
    width: 1px;
    height: 12px;
    background: ${COLORS.dark};
  }

  ${({ $active }) =>
    $active &&
    css`
      border: 1px solid #000;
      border-top: 0;
      background: #fff;
      color: #000;

      &::after {
        display: none;
      }
    `}
`;

const TabArrows = styled.div`
  margin: 5px 8px 0 auto;
`;

const StatusBar = styled.footer`
  height: 22px;

  display: flex;
  align-items: center;

  border-top: 1px solid #fff;
`;

const StatusHelp = styled.div`
  padding-left: 2px;
  flex: 1;
`;

const StatusCell = styled.div`
  width: ${({ $width }) => $width}px;
  height: 16px;
  padding-left: 5px;

  display: flex;
  align-items: center;

  border-left: 1px solid ${COLORS.line};
`;

const Traffic = styled.span`
  flex: 1;
  text-align: center;
`;

export default App;
